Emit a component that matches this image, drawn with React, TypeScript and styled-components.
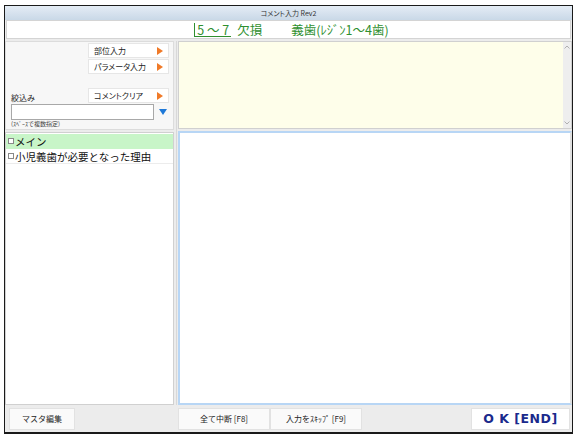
import React from "react";
import styled, { createGlobalStyle } from "styled-components";

const GlobalStyle = createGlobalStyle`
  html, body {
    margin: 0;
    padding: 0;
    background: #ffffff;
  }
  body {
    font-family: "Noto Sans CJK JP", "Noto Sans", sans-serif;
  }
`;

const Frame = styled.div`
  box-sizing: border-box;
  margin: 5px 0 0 4px;
  width: 569px;
  height: 429px;
  border: 1px solid #1a1a1a;
  border-bottom-width: 2px;
  background: #ececec;
  display: flex;
  flex-direction: column;
`;

const TitleBar = styled.div`
  height: 14px;
  flex: 0 0 14px;
  background: linear-gradient(#e4ecf5, #c9d8e7);
  display: flex;
  align-items: center;
  justify-content: center;
  font-size: 7px;
  color: #333;
  font-feature-settings: "palt";
`;

const Header = styled.div`
  height: 17px;
  flex: 0 0 17px;
  margin: 0 1px;
  background: #ffffff;
  border: 1px solid #d4d4d4;
  display: flex;
  align-items: center;
  justify-content: center;
  font-size: 12.5px;
  color: #2f8f2f;
  white-space: pre;
  padding-left: 6px;
`;

const Tooth = styled.span`
  border-left: 1px solid #2f8f2f;
  border-bottom: 1px solid #2f8f2f;
  padding: 0 2px;
  line-height: 13px;
  margin-right: 6px;
`;

const Gap = styled.span`
  display: inline-block;
  width: 29px;
`;

const Body = styled.div`
  flex: 1;
  display: flex;
  padding-top: 2px;
  gap: 2px;
  min-height: 0;
`;

const LeftCol = styled.div`
  width: 169px;
  display: flex;
  flex-direction: column;
  gap: 2px;
`;

const ControlPanel = styled.div`
  height: 86px;
  background: #f7f7f7;
  border: 1px solid #dcdcdc;
  display: grid;
  grid-template-columns: 1fr 81px;
  grid-template-rows: 16px 16px 13px 16px 16px auto;
  padding: 1px 4px 0 5px;
`;

const SideButton = styled.div<{ $row: number }>`
  grid-column: 2;
  grid-row: ${(p) => p.$row};
  box-sizing: border-box;
  height: 15px;
  background: #ffffff;
  border: 1px solid #e6e6e6;
  display: flex;
  align-items: center;
  justify-content: space-between;
  padding: 0 5px;
  font-size: 8px;
  color: #222;
  font-feature-settings: "palt";
`;

const OrangeTri = styled.span`
  width: 0;
  height: 0;
  border-top: 4px solid transparent;
  border-bottom: 4px solid transparent;
  border-left: 6px solid #f07a28;
`;

const FilterLabel = styled.div`
  grid-column: 1;
  grid-row: 4;
  align-self: end;
  font-size: 8px;
  color: #222;
  padding-bottom: 1px;
`;

const FilterRow = styled.div`
  grid-column: 1 / 3;
  grid-row: 5;
  display: flex;
  align-items: center;
  gap: 4px;
`;

const FilterInput = styled.div`
  box-sizing: border-box;
  width: 143px;
  height: 16px;
  background: #fff;
  border: 1px solid #a8a8a8;
`;

const BlueTri = styled.span`
  width: 0;
  height: 0;
  border-left: 4px solid transparent;
  border-right: 4px solid transparent;
  border-top: 6px solid #1e78d8;
  margin-left: 1px;
`;

const Hint = styled.div`
  grid-column: 1 / 3;
  grid-row: 6;
  font-size: 6px;
  color: #444;
  line-height: 8px;
`;

const ListPanel = styled.div`
  flex: 1;
  background: #ffffff;
  border: 1px solid #d0d0d0;
  display: flex;
  flex-direction: column;
  padding-top: 1px;
`;

const ListItem = styled.div<{ $active?: boolean }>`
  height: 14px;
  display: flex;
  align-items: center;
  font-size: 10.5px;
  color: #111;
  background: ${(p) => (p.$active ? "#c8f5c8" : "#ffffff")};
  border-bottom: 1px solid ${(p) => (p.$active ? "#c8f5c8" : "#ececec")};
`;

const Check = styled.span`
  box-sizing: border-box;
  width: 6px;
  height: 6px;
  border: 1px solid #888;
  margin: 0 1px 0 2px;
  background: #fff;
`;

const RightCol = styled.div`
  flex: 1;
  display: flex;
  flex-direction: column;
  gap: 2px;
  border-left: 1px solid #d8d8d8;
  padding-left: 1px;
`;

const CommentArea = styled.div`
  height: 86px;
  display: flex;
  background: #fefeea;
  border: 1px solid #d0d0d0;
`;

const CommentText = styled.div`
  flex: 1;
`;

const ScrollBar = styled.div`
  width: 8px;
  background: #eeeeee;
  display: flex;
  flex-direction: column;
  justify-content: space-between;
  align-items: center;
  padding: 3px 0;
`;

const ScrollArrow = styled.svg`
  display: block;
`;

const EditArea = styled.div`
  flex: 1;
  background: #ffffff;
  border: 2px solid #b8d6f5;
  border-right-color: #e0e0e0;
`;

const Footer = styled.div`
  height: 27px;
  flex: 0 0 27px;
  display: flex;
  align-items: center;
  padding: 0 2px 0 4px;
`;

const FooterButton = styled.div<{ $w: number }>`
  box-sizing: border-box;
  width: ${(p) => p.$w}px;
  height: 22px;
  background: #fafafa;
  border: 1px solid #e2e2e2;
  display: flex;
  align-items: center;
  justify-content: center;
  font-size: 8px;
  color: #222;
`;

const Spacer = styled.div<{ $w?: number }>`
  flex: ${(p) => (p.$w ? `0 0 ${p.$w}px` : "1")};
`;

const OkButton = styled(FooterButton)`
  font-family: "DejaVu Sans", "Noto Sans", sans-serif;
  font-weight: bold;
  font-size: 12.5px;
  color: #1a2a8c;
  letter-spacing: 0.5px;
  background: #ffffff;
`;

export default function App() {
  return (
    <>
      <GlobalStyle />
      <Frame>
        <TitleBar>コメント入力 Rev2</TitleBar>
        <Header>
          <Tooth>5 ～ 7</Tooth>欠損
          <Gap />
          義歯(ﾚｼﾞﾝ1～4歯)
        </Header>
        <Body>
          <LeftCol>
            <ControlPanel>
              <SideButton $row={1}>
                部位入力
                <OrangeTri />
              </SideButton>
              <SideButton $row={2}>
                パラメータ入力
                <OrangeTri />
              </SideButton>
              <FilterLabel>絞込み</FilterLabel>
              <SideButton $row={4}>
                コメントクリア
                <OrangeTri />
              </SideButton>
              <FilterRow>
                <FilterInput />
                <BlueTri />
              </FilterRow>
              <Hint>(ｽﾍﾟｰｽで複数指定)</Hint>
            </ControlPanel>
            <ListPanel>
              <ListItem $active>
                <Check />
                メイン
              </ListItem>
              <ListItem>
                <Check />
                小児義歯が必要となった理由
              </ListItem>
            </ListPanel>
          </LeftCol>
          <RightCol>
            <CommentArea>
              <CommentText />
              <ScrollBar>
                <ScrollArrow width="6" height="4" viewBox="0 0 6 4">
                  <path d="M0.5 3.5 L3 1 L5.5 3.5" fill="none" stroke="#b0b0b0" strokeWidth="1" />
                </ScrollArrow>
                <ScrollArrow width="6" height="4" viewBox="0 0 6 4">
                  <path d="M0.5 0.5 L3 3 L5.5 0.5" fill="none" stroke="#b0b0b0" strokeWidth="1" />
                </ScrollArrow>
              </ScrollBar>
            </CommentArea>
            <EditArea />
          </RightCol>
        </Body>
        <Footer>
          <FooterButton $w={66}>マスタ編集</FooterButton>
          <Spacer $w={103} />
          <FooterButton $w={92}>全て中断 [F8]</FooterButton>
          <FooterButton $w={92}>入力をｽｷｯﾌﾟ [F9]</FooterButton>
          <Spacer />
          <OkButton $w={99}>O K [END]</OkButton>
        </Footer>
      </Frame>
    </>
  );
}
